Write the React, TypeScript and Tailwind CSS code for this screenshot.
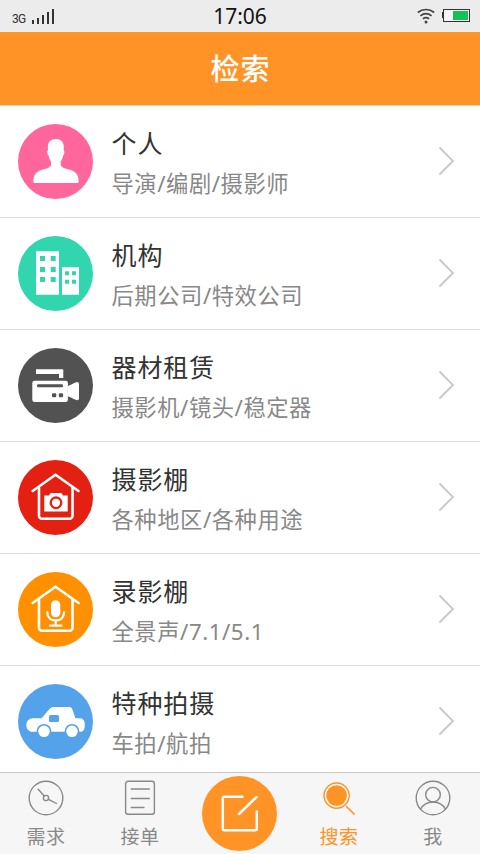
import type { ReactNode } from "react"

interface Category {
  id: string
  title: string
  subtitle: string
  color: string
  icon: ReactNode
}

const house = (
  <g fill="none" stroke="#fff" strokeWidth="2.6" strokeLinecap="round" strokeLinejoin="round">
    <path d="M14.700 31 37.500 14.700 60.500 31" />
    <path d="M21 28v27.700a3 3 0 0 0 3 3h27.500a3 3 0 0 0 3-3V28" />
  </g>
)

const categories: Category[] = [
  {
    id: "person",
    title: "个人",
    subtitle: "导演/编剧/摄影师",
    color: "#ff669c",
    icon: (
      <path
        fill="#fff"
        d="M37.800 15c5.300 0 8 3.200 8 8v3.500c1 .5.8 3.800-.6 5-.5 2.800-1.300 4.200-2.500 6v3.700c1.500 3 5.800 3.500 9.300 4.500 6 1.800 8.700 5.500 8.700 11.700 0 .8-.5 1.500-1.300 1.500H16.600c-.8 0-1.300-.7-1.300-1.500 0-6.200 2.700-9.900 8.700-11.700 3.500-1 7.500-1.500 9-4.500v-3.700c-1.200-1.800-2-3.200-2.500-6-1.400-1.200-1.600-4.500-.6-5V23c0-4.800 2.600-8 7.900-8z"
      />
    ),
  },
  {
    id: "org",
    title: "机构",
    subtitle: "后期公司/特效公司",
    color: "#32d6ae",
    icon: (
      <>
        <path fill="#fff" d="M18 15.300h23v43.400H18zM44 31.300h17v27.400H44z" />
        <path
          fill="#32d6ae"
          d="M22 20h5v5h-5zM32.700 20h5v5h-5zM22 31h5v5h-5zM32.700 31h5v5h-5zM22 41h5v5h-5zM32.700 41h5v5h-5zM47 35.300h4v4h-4zM54 35.300h4v4h-4zM47 43.700h4v4h-4zM54 43.700h4v4h-4z"
        />
      </>
    ),
  },
  {
    id: "gear",
    title: "器材租赁",
    subtitle: "摄影机/镜头/稳定器",
    color: "#525252",
    icon: (
      <>
        <path fill="#fff" d="M18 21.300h26.300a1 1 0 0 1 1 1V30H41v-4H18z" />
        <rect x="14.300" y="32.700" width="35.600" height="21.300" rx="2.300" fill="#fff" />
        <path fill="#fff" d="M49.700 38c4-.8 6.500-3.700 9.300-4 1.400 0 2 .8 2 2v14.300c0 1.200-.6 2-2 2-2.800-.3-5.300-3.200-9.300-4z" />
        <rect x="19" y="36.200" width="26" height="3" rx="1.200" fill="#525252" />
        <rect x="34" y="45.300" width="4.300" height="4" rx="1.200" fill="#525252" />
        <rect x="40.800" y="45.300" width="4.300" height="4" rx="1.200" fill="#525252" />
      </>
    ),
  },
  {
    id: "photo-studio",
    title: "摄影棚",
    subtitle: "各种地区/各种用途",
    color: "#e42013",
    icon: (
      <>
        {house}
        <path fill="#fff" d="M26.300 35.500H31l1.500-2.500h11l1.500 2.500h4.700v16H26.300z" />
        <circle cx="38" cy="42.800" r="5.300" fill="#fff" stroke="#e42013" strokeWidth="2.300" />
      </>
    ),
  },
  {
    id: "video-studio",
    title: "录影棚",
    subtitle: "全景声/7.1/5.1",
    color: "#ff9000",
    icon: (
      <>
        {house}
        <rect x="33" y="28.300" width="9.300" height="17" rx="4.600" fill="#fff" />
        <path
          d="M29.300 40.500c0 5 3.600 8 8.400 8s8.300-3 8.300-8M37.700 48.500v5M32 53.600h11.500"
          fill="none"
          stroke="#fff"
          strokeWidth="2.300"
          strokeLinecap="round"
        />
      </>
    ),
  },
  {
    id: "special",
    title: "特种拍摄",
    subtitle: "车拍/航拍",
    color: "#54a3ea",
    icon: (
      <>
        <path
          fill="#fff"
          d="M15 34.300h8.500l8-9.300c1.200-1.300 2.400-2 4-2h15.700c1.600 0 2.500.7 3 2l3.300 9.300h4c3 0 5.200 2 5.200 5v3.500c0 3-2 5-4.500 5H14.500c-3.500 0-6.200-2.700-6.200-6.500s2.700-7 6.700-7z"
        />
        <rect x="31" y="31" width="10" height="7" rx="1.500" fill="#54a3ea" />
        <circle cx="26" cy="47.300" r="6.600" fill="#fff" stroke="#54a3ea" strokeWidth="1.600" />
        <circle cx="54" cy="47.300" r="6.600" fill="#fff" stroke="#54a3ea" strokeWidth="1.600" />
      </>
    ),
  },
]

const tabs = [
  {
    key: "demand",
    label: "需求",
    icon: (
      <>
        <circle cx="18" cy="18" r="16.800" />
        <circle cx="18" cy="18" r="2.600" />
        <path d="m16.200 16-6-6.800M20.500 19.300l8 4.200" />
      </>
    ),
  },
  {
    key: "orders",
    label: "接单",
    icon: (
      <>
        <rect x="3.600" y="1.200" width="28.800" height="33" rx="2.500" />
        <path d="M9.300 9h18M9.300 18.500h18M9.300 27.500H22" />
      </>
    ),
  },
  { key: "compose", label: "", icon: null },
  {
    key: "search",
    label: "搜索",
    icon: (
      <>
        <circle cx="15.600" cy="15.600" r="12.600" />
        <circle cx="15.600" cy="15.600" r="10.300" fill="currentColor" stroke="none" />
        <path d="m25.500 26.500 7.500 7.500" strokeWidth="1.700" />
      </>
    ),
  },
  {
    key: "me",
    label: "我",
    icon: (
      <>
        <circle cx="18" cy="18" r="16.800" />
        <circle cx="18" cy="14.700" r="7.300" />
        <path d="M5.500 29.300C8.200 24.300 12.700 22 18 22s9.800 2.300 12.500 7.300" />
      </>
    ),
  },
]

function StatusBar() {
  return (
    <div className="grid h-8 shrink-0 grid-cols-3 items-center bg-[#ececec] px-[10px] text-[#333]">
      <div className="flex items-center gap-[6px] pl-[2px]">
        <span className="w-[14px] pt-[5px] font-['Roboto',sans-serif] text-[12px] leading-none tracking-[-0.8px]">3G</span>
        <svg width="23" height="16" viewBox="0 0 23 16" fill="#333">
          <path d="M0 12h2v4H0zM5 10h2v6H5zM10 7h2v9h-2zM15 4h2v12h-2zM20 1h2v15h-2z" />
        </svg>
      </div>
      <span className="text-center text-[21px] leading-8 text-[#111]">17:06</span>
      <div className="flex items-center justify-end gap-[7px]">
        <svg width="18" height="17" viewBox="0 0 18 17" fill="none" stroke="#444" strokeWidth="1.700">
          <path d="M.8 4.500c4.800-4 11.600-4 16.400 0M3.400 7.800c3.400-2.700 7.800-2.700 11.200 0M5.900 10.800c1.900-1.500 4.300-1.500 6.200 0" />
          <circle cx="9" cy="14" r="1.500" fill="#444" stroke="none" />
        </svg>
        <svg className="-mt-px" width="28" height="13" viewBox="0 0 28 13">
          <path d="M0 3h1.500v6H0z" fill="#333" />
          <rect x="1.500" y=".5" width="26" height="12" fill="#f5f5f5" stroke="#333" />
          <rect x="11" y="2" width="15" height="9" fill="#12c258" />
        </svg>
      </div>
    </div>
  )
}

function CategoryRow({ item }: { item: Category }) {
  return (
    <li className="flex h-28 shrink-0 items-center border-b border-[#dcdcdc] pl-[18px] pr-[25px]">
      <svg className="shrink-0" width="75" height="75" viewBox="0 0 75 75">
        <circle cx="37.500" cy="37.500" r="37.500" fill={item.color} />
        {item.icon}
      </svg>
      <div className="ml-[18.5px] flex-1 whitespace-nowrap pt-1">
        <h2 className="text-[25px] leading-[38px] tracking-[0.9px] text-[#333]">{item.title}</h2>
        <p className="mt-[2px] text-[22.3px] leading-10 tracking-[0.55px] text-[#888]">{item.subtitle}</p>
      </div>
      <svg className="-mt-[2px]" width="17" height="30" viewBox="0 0 17 30" fill="none" stroke="#c8c8c8" strokeWidth="1.800">
        <path d="m1.500 1.500 13.500 13.500-13.500 13.500" />
      </svg>
    </li>
  )
}

export default function App() {
  const active = "search"

  return (
    <div className="flex h-[854px] w-[480px] flex-col overflow-hidden bg-white font-['Noto_Sans','Noto_Sans_CJK_SC',sans-serif]">
      <StatusBar />
      <header className="flex h-[74px] shrink-0 items-center justify-center border-b border-[#ffd0a0] bg-[#ff9326]">
        <h1 className="pl-px text-[29px] font-medium leading-none tracking-[1px] text-white">检索</h1>
      </header>

      <ul className="flex min-h-0 flex-1 flex-col overflow-hidden">
        {categories.map((c) => (
          <CategoryRow key={c.id} item={c} />
        ))}
      </ul>

      <nav className="grid h-[82px] shrink-0 grid-cols-[92px_96px_103px_96px_92px] border-t border-[#c8c8c8] bg-[#f6f6f6]">
        {tabs.map((t) =>
          t.key === "compose" ? (
            <button key={t.key} className="flex justify-center pt-[3px]">
              <svg width="75" height="75" viewBox="0 0 75 75">
                <circle cx="37.500" cy="37.500" r="37.500" fill="#ff9326" />
                <path
                  d="M40.500 20.700H22.300a1.500 1.500 0 0 0-1.500 1.500v30.500a1.500 1.500 0 0 0 1.500 1.500h31a1.500 1.500 0 0 0 1.500-1.500V35.500M37 38l17.500-17"
                  fill="none"
                  stroke="#fff"
                  strokeWidth="2.500"
                  strokeLinecap="round"
                />
              </svg>
            </button>
          ) : (
            <button
              key={t.key}
              data-active={t.key === active}
              className="flex flex-col items-center pt-[7px] text-[#888] data-[active=true]:text-[#ff9326]"
            >
              <svg
                width="36"
                height="36"
                viewBox="0 0 36 36"
                fill="none"
                stroke="currentColor"
                strokeWidth="1.400"
                strokeLinecap="round"
              >
                {t.icon}
              </svg>
              <span className="mt-[7px] text-[19px] leading-[28px] tracking-[0.5px]">{t.label}</span>
            </button>
          ),
        )}
      </nav>
    </div>
  )
}
